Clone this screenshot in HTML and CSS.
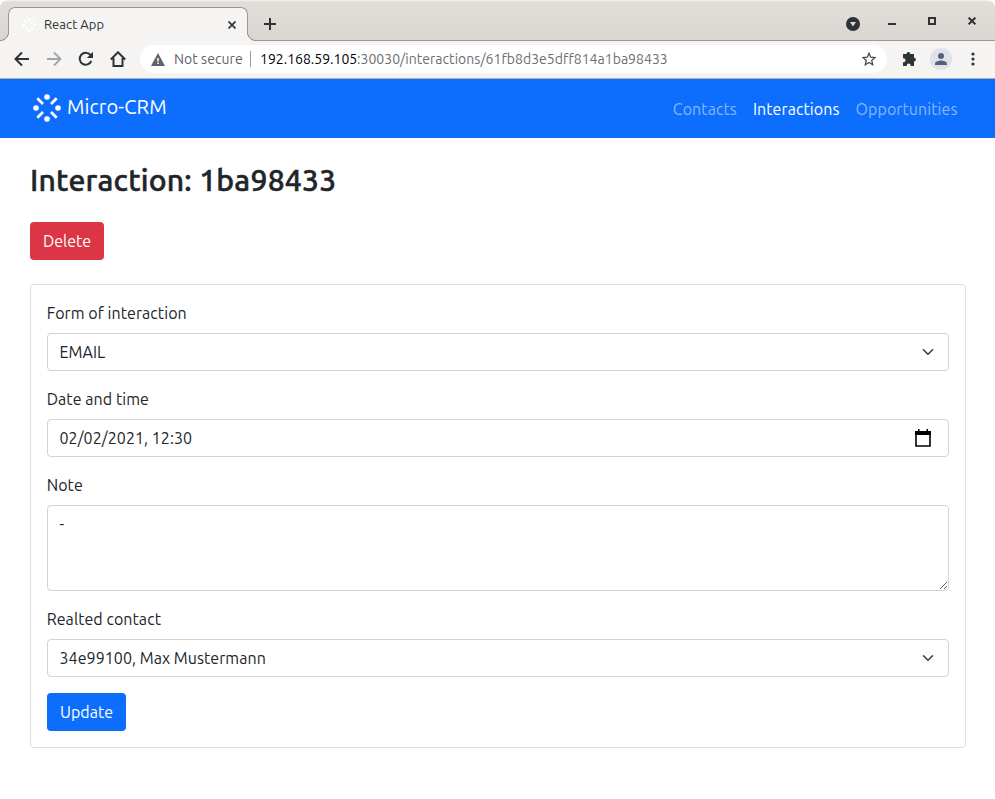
FILE: index.html
```html
<!DOCTYPE html>
<html lang="en">
<head>
<meta charset="utf-8">
<title>React App</title>
<link rel="stylesheet" href="styles.css">
</head>
<body>
<svg class="defs" width="0" height="0">
  <symbol id="logo" viewBox="0 0 28 28">
    <g fill="currentColor"><circle cx="14" cy="3" r="2.800"/><circle cx="14" cy="25" r="2.800"/><circle cx="3" cy="14" r="2.800"/><circle cx="25" cy="14" r="2.800"/></g>
    <path d="M4.300 4.300l5.700 5.700M23.700 4.300L18 10M4.300 23.700L10 18M23.700 23.700L18 18" stroke="currentColor" stroke-width="2.700" fill="none"/>
  </symbol>
</svg>
<div class="tabstrip">
  <div class="tab">
    <svg class="favicon" width="14" height="14"><use href="#logo"/></svg>
    <span class="tab-title">React App</span>
    <svg class="tab-close" width="8" height="8" viewBox="0 0 8 8"><path d="M.5.5l7 7M7.500.5l-7 7" stroke="#2e3436" stroke-width="1.700"/></svg>
  </div>
  <svg class="plus" width="12" height="12" viewBox="0 0 12 12"><path d="M6 0v12M0 6h12" stroke="#2e3436" stroke-width="2"/></svg>
  <div class="window-controls">
    <svg width="14" height="14" viewBox="0 0 14 14"><circle cx="7" cy="7" r="7" fill="#2e3436"/><path d="M4 5h6L7 9.500z" fill="#e0ddd9"/></svg>
    <svg width="8" height="14" viewBox="0 0 8 14"><path d="M0 7h8" stroke="#2e3436" stroke-width="2"/></svg>
    <svg width="8" height="14" viewBox="0 0 8 14"><path d="M1 1h6v6H1z" fill="none" stroke="#2e3436" stroke-width="2"/></svg>
    <svg width="8" height="14" viewBox="0 0 8 14"><path d="M.6.600l6.800 6.800M7.400.600L.6 7.400" stroke="#2e3436" stroke-width="2"/></svg>
  </div>
</div>
<div class="toolbar">
  <svg width="16" height="16" viewBox="0 0 16 16"><path d="M15 8H2M8 1.500L1.500 8 8 14.500" fill="none" stroke="#2e3436" stroke-width="2"/></svg>
  <svg width="16" height="16" viewBox="0 0 16 16"><path d="M1 8h13M8 1.500L14.500 8 8 14.500" fill="none" stroke="#a3a4a3" stroke-width="1.800"/></svg>
  <svg width="16" height="16" viewBox="0 0 16 16"><path d="M13.300 10A6 6 0 1 1 12.400 3.900L14 5.500" fill="none" stroke="#2e3436" stroke-width="2"/><path d="M15 .8V7H8.800z" fill="#2e3436"/></svg>
  <svg width="16" height="16" viewBox="0 0 16 16"><path d="M.8 8.500L8 1.300l7.200 7.200M3.500 7v8h9V7" fill="none" stroke="#2e3436" stroke-width="2"/></svg>
  <div class="omnibox">
    <svg class="warning" width="14" height="13" viewBox="0 0 14 13"><path d="M7 0l7 13H0z" fill="#5f6368"/><path d="M7 5v3.500M7 9.500v1.500" stroke="#fff" stroke-width="1.500"/></svg>
    <span class="insecure">Not secure</span>
    <span class="divider"></span>
    <span class="host">192.168.59.105</span><span class="path">:30030/interactions/61fb8d3e5dff814a1ba98433</span>
    <svg class="star" width="14" height="14" viewBox="0 0 14 14"><path d="M7 1.200l1.700 4 4.300.4-3.300 2.900 1 4.200L7 10.500l-3.700 2.200 1-4.200L1 5.600l4.300-.4z" fill="none" stroke="#484c4f" stroke-width="1.300"/></svg>
  </div>
  <svg class="puzzle" width="15" height="15" viewBox="0 0 15 15"><path d="M1 3h3.500a1.900 1.900 0 1 1 3.800 0H12v3.700a1.900 1.900 0 1 1 0 3.800V15H8.700v-.5a2 2 0 0 0-4 0v.5H1v-3.700h.5a2 2 0 0 0 0-4H1z" fill="#2e3436"/></svg>
  <svg class="avatar" width="22" height="22" viewBox="0 0 22 22"><circle cx="11" cy="11" r="11" fill="#dfe2e8"/><circle cx="11" cy="8" r="3" fill="#56607a"/><path d="M5 17v-1.500c0-2 4-3 6-3s6 1 6 3V17z" fill="#56607a"/></svg>
  <svg class="dots" width="4" height="14" viewBox="0 0 4 14"><g fill="#2e3436"><circle cx="2" cy="2" r="1.600"/><circle cx="2" cy="7" r="1.600"/><circle cx="2" cy="12" r="1.600"/></g></svg>
</div>
<nav class="navbar">
  <a class="brand"><svg width="28" height="28"><use href="#logo"/></svg><span class="brand-name">Micro-CRM</span></a>
  <div class="links">
    <a>Contacts</a><a class="active">Interactions</a><a>Opportunities</a>
  </div>
</nav>
<main>
  <h2>Interaction: 1ba98433</h2>
  <button class="btn delete">Delete</button>
  <form class="card">
    <label>Form of interaction</label>
    <div class="control"><span>EMAIL</span><svg width="12" height="12" viewBox="0 0 16 16"><path d="M2 5l6 6 6-6" fill="none" stroke="#343a40" stroke-width="2" stroke-linecap="round" stroke-linejoin="round"/></svg></div>
    <label>Date and time</label>
    <div class="control"><span>02/02/2021, 12:30</span><svg class="calendar" width="16" height="18" viewBox="0 0 16 18"><path d="M1 3h14v14H1z" fill="none" stroke="#000" stroke-width="1.600"/><path d="M0 2h16v4H0zM3 0h1.500v3H3zM11.500 0H13v3h-1.500z"/></svg></div>
    <label>Note</label>
    <textarea>-</textarea>
    <label>Realted contact</label>
    <div class="control"><span>34e99100, Max Mustermann</span><svg width="12" height="12" viewBox="0 0 16 16"><path d="M2 5l6 6 6-6" fill="none" stroke="#343a40" stroke-width="2" stroke-linecap="round" stroke-linejoin="round"/></svg></div>
    <button class="btn update" type="button">Update</button>
  </form>
</main>
</body>
</html>
```
FILE: styles.css
```css
* { box-sizing: border-box; }
body { margin: 0; background: #fff; color: #212529; font: 16px/24px Ubuntu, "Noto Sans", sans-serif; }
svg { display: block; flex: none; }
.defs { position: absolute; }
.tabstrip { height: 41px; display: flex; background: linear-gradient(#f5f4f2 0, #e1deda 2px, #dad6d2 40px); border-bottom: 1px solid #9b9792; padding-left: 8px; border-radius: 8px 8px 0 0; }
.tab { position: relative; width: 240px; height: 34px; margin-top: 7px; display: flex; align-items: center; padding: 0 11px 0 13px; background: #f5f4f2; border: 1px solid #9b9792; border-bottom: 0; border-radius: 7px 7px 0 0; }
.tab::before, .tab::after { content: ""; position: absolute; bottom: 0; width: 9px; height: 9px; }
.tab::before { left: -9px; background: radial-gradient(circle at 0 0, #dbd7d3 7.700px, #9b9792 8.200px 8.800px, #f5f4f2 9.300px); }
.tab::after { right: -9px; background: radial-gradient(circle at 100% 0, #dbd7d3 7.700px, #9b9792 8.200px 8.800px, #f5f4f2 9.300px); }
.favicon { color: #fff; }
.tab-title { margin-left: 8px; flex: 1; padding-bottom: 2px; font-size: 13px; letter-spacing: .05px; color: #2e3436; }
.plus { margin: 18px 0 0 16px; }
.window-controls { margin-left: auto; padding: 17px 19px 0 0; display: flex; gap: 32px; }
.window-controls svg:first-child { margin-right: -4px; }
.toolbar { height: 38px; display: flex; align-items: center; background: #f5f4f2; border-bottom: 1px solid #b5b2ae; padding: 0 20px 1px 14px; gap: 16px; }
.omnibox { height: 28px; flex: 1; display: flex; align-items: center; border-radius: 14px; background: #fff; padding: 0 11px; margin: 0 -2px 0 -2px; font-size: 14px; white-space: nowrap; }
.insecure { color: #5f6368; width: 76px; margin-left: 9px; letter-spacing: .05px; }
.divider { width: 1px; height: 16px; background: #9a9c9e; margin-right: 9px; }
.host { color: #000; width: 97px; }
.path { color: #6b6e72; letter-spacing: .03px; }
.star { margin-left: auto; }
.puzzle { margin: 0 -3px 2px 1px; }
.dots { margin-left: 3px; }
.navbar { height: 59px; background: #0d6efd; color: #fff; display: flex; align-items: center; justify-content: space-between; padding: 0 37.500px 0 32.500px; }
.brand { display: flex; align-items: center; gap: 6.500px; }
.brand svg { margin-bottom: 1px; }
.brand-name { font-size: 20px; letter-spacing: .1px; padding-bottom: 4px; }
.links { display: flex; gap: 16px; color: #86b6fe; padding-top: 1px; letter-spacing: .08px; }
.links .active { color: #fff; }
main { padding: 23px 29px 0 30px; }
h2 { margin: 0 0 23px; font-size: 30.155px; line-height: 38px; font-weight: 500; font-family: "Ubuntu Medium", Ubuntu, "Noto Sans", sans-serif; letter-spacing: .2px; -webkit-text-stroke: .5px #212529; }
.btn { display: block; height: 38px; border: 0; border-radius: 4px; padding: 0; color: #fff; font: inherit; }
.delete { width: 74px; background: #dc3545; }
.update { width: 79px; background: #0d6efd; }
.card { margin-top: 24px; padding: 16px; border: 1px solid #dfdfdf; border-radius: 4px; }
label { display: block; margin: 0 0 8px -.3px; letter-spacing: .06px; }
.control, textarea { width: 100%; border: 1px solid #ced4da; border-radius: 4px; margin: 0 0 16px; padding: 6px 11.500px; }
.control { height: 38px; display: flex; align-items: center; justify-content: space-between; padding-right: 14px; letter-spacing: .06px; }
.calendar { margin-right: 3px; }
textarea { display: block; height: 86px; font: inherit; color: inherit; background: #fff; resize: vertical; }
```
